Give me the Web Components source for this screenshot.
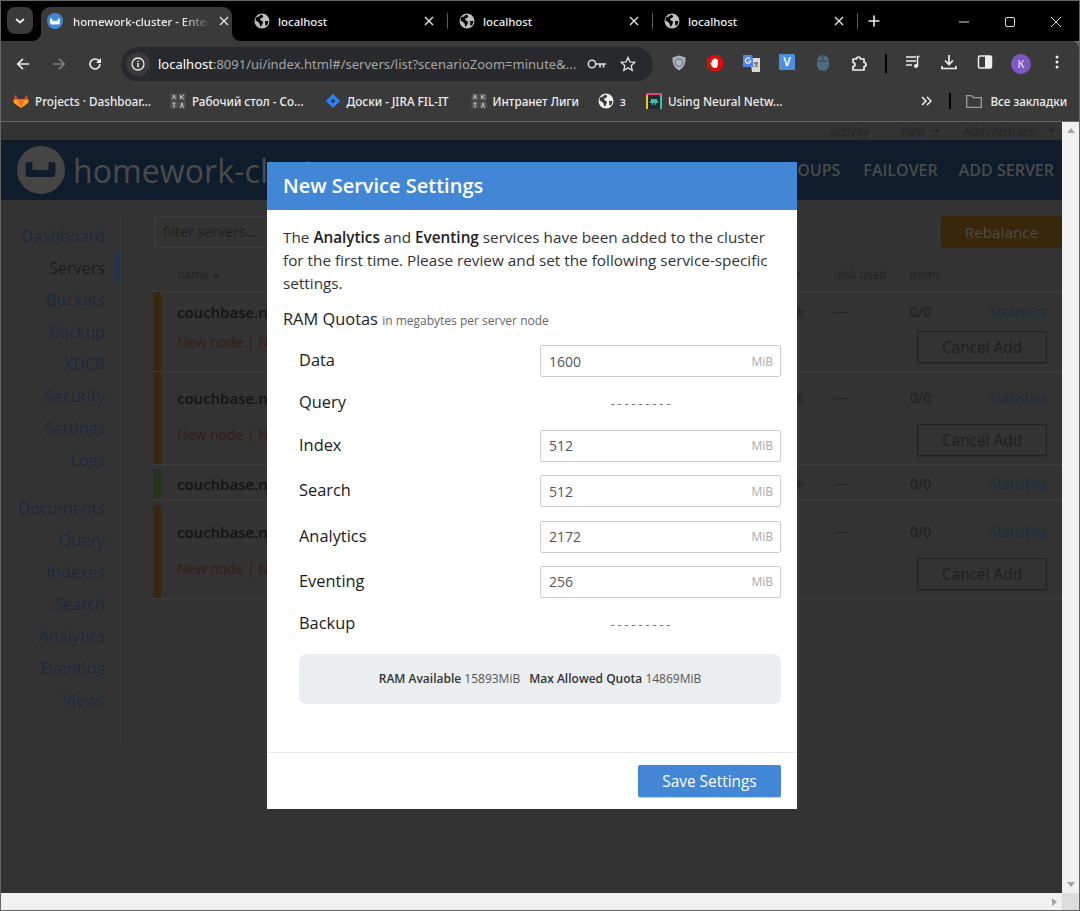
<!DOCTYPE html>
<html lang="en">
<head>
<meta charset="utf-8">
<title>homework-cluster</title>
<style>
  html, body { margin: 0; height: 100%; overflow: hidden; }
  body { background: #666; padding: 1px; box-sizing: border-box; display: flex; flex-direction: column; font-family: "Open Sans", "Liberation Sans", sans-serif; }
  browser-chrome { flex: none; }
  browser-viewport { flex: 1; min-height: 0; }
</style>
</head>
<body>
<browser-chrome></browser-chrome>
<browser-viewport>
  <cluster-page></cluster-page>
  <service-settings slot="dialog"></service-settings>
</browser-viewport>

<script>
const GLOBE = (c, bg) => `<svg width="16" height="16" viewBox="0 0 16 16" style="display:block"><circle cx="8" cy="8" r="7.5" fill="${c}"/><path d="M2 4.500 5 3.500 7 1.500 9.500 3 8 5 6 5.500 6.800 7.500 9 8.500 8.500 11 6.500 14 5.500 10.500 3.500 8.500 1.500 7.500ZM11 8h3.500l-1 3.500L11.500 13Z" fill="${bg}"/></svg>`;
const CLOSE = `<svg width="10" height="10" viewBox="0 0 10 10"><path d="M1 1 9 9M9 1 1 9" stroke="#e3e3e3" stroke-width="1.4" fill="none"/></svg>`;

class BrowserTab extends HTMLElement {
  constructor() {
    super();
    const active = this.hasAttribute('active');
    this.attachShadow({ mode: 'open' }).innerHTML = `
      <style>
        :host { display: flex; align-items: center; width: 205px; height: 34px; box-sizing: border-box; padding: 0 17px 6px 8px; position: relative; font: 500 11.4px "Noto Sans", "Open Sans", sans-serif; color: #eee; }
        :host([active]) { background: #3a3a3a; border-radius: 9px 9px 0 0; width: 191px; margin: 0 14px 0 8px; padding: 0 3px 6px 6px; }
        :host([active])::before, :host([active])::after { content: ""; position: absolute; bottom: 0; width: 8px; height: 8px; }
        :host([active])::before { left: -8px; background: radial-gradient(circle at 0 0, #000 7.5px, #3a3a3a 8px); }
        :host([active])::after { right: -8px; background: radial-gradient(circle at 100% 0, #000 7.5px, #3a3a3a 8px); }
        .icon { width: 16px; height: 16px; flex: none; margin-right: 8px; }
        :host([active]) .icon { margin-right: 10px; }
        .title { flex: 1; white-space: nowrap; overflow: hidden; ${active ? '-webkit-mask-image: linear-gradient(90deg,#000 80%,transparent);' : ''} }
        .close { flex: none; width: 10px; height: 10px; margin-left: 9px; line-height: 0; }
        :host([sep])::after { content: ""; position: absolute; right: 3px; top: 6px; height: 16px; width: 1px; background: #5a5a5a; }
      </style>
      <span class="icon"><slot name="icon"></slot></span>
      <span class="title"><slot></slot></span>
      <span class="close">${CLOSE}</span>`;
  }
}

class BrowserChrome extends HTMLElement {
  constructor() {
    super();
    const ic = (w, body) => `<svg width="${w}" height="${w}" viewBox="0 0 ${w} ${w}">${body}</svg>`;
    const globeDim = GLOBE('#bdbdbd', '#000');
    const aika = `<svg width="16" height="16" viewBox="0 0 16 16"><path d="M.5.500h7v7h-7zM8.500.500h7v7h-7zM.5 8.500h7v7h-7zM8.500 8.500h7v7h-7z" fill="#555"/><path d="M2.500 6 4 2l1.500 4M10.500 2v4M14 2l-3 2 3 2M4 10v5M2.500 10h3M10.500 15 12 10l1.500 5" stroke="#ddd" stroke-width=".8" fill="none"/></svg>`;
    this.attachShadow({ mode: 'open' }).innerHTML = `
      <style>
        :host { display: block; color: #eee; font-family: "Noto Sans", "Open Sans", sans-serif; }
        .strip { height: 40px; background: #000; display: flex; align-items: flex-end; position: relative; }
        .search { width: 26px; height: 27px; background: #3a3a3a; border-radius: 8px; margin: 0 0 7px 6px; flex: none; display: flex; align-items: center; justify-content: center; }
        .tabs { display: flex; align-items: flex-end; }
        .new { width: 16px; margin: 0 0 14px 7px; line-height: 0; }
        .win { margin-left: auto; display: flex; align-self: flex-start; margin-top: 9px; }
        .win span { width: 46px; height: 24px; display: flex; align-items: center; justify-content: center; }
        .tools { height: 40px; box-sizing: border-box; padding-top: 6px; background: #3a3a3a; display: flex; align-items: center; border-radius: 0 8px 0 0; }
        .btn { width: 36px; display: flex; justify-content: center; flex: none; line-height: 0; }
        .omni { width: 532px; height: 35px; margin-left: 8px; background: #27292d; border-radius: 18px; display: flex; align-items: center; flex: none; box-sizing: border-box; padding: 0 12px 0 5px; }
        .chip { width: 24px; height: 24px; border-radius: 50%; background: #3a3a3a; display: flex; align-items: center; justify-content: center; flex: none; }
        .url { margin-left: 8px; font-size: 13px; white-space: nowrap; color: #a6a6a6; width: 426px; overflow: hidden; flex: none; }
        .url b { font-weight: 400; color: #fff; }
        .exts { display: flex; margin-left: 8px; }
        .marks { height: 40px; background: #3a3a3a; border-bottom: 1px solid #666; display: flex; align-items: center; font-size: 11.7px; font-weight: 500; white-space: nowrap; position: relative; }
        .mark { display: flex; align-items: center; gap: 6px; flex: none; }
        .mark svg { flex: none; }
        .vsep { width: 2px; height: 19px; background: #000; flex: none; }
      </style>
      <div class="strip">
        <div class="search"><svg width="10" height="6" viewBox="0 0 10 6"><path d="M1 1l4 3.500L9 1" stroke="#eee" stroke-width="1.800" fill="none"/></svg></div>
        <div class="tabs">
          <browser-tab active>
            <svg slot="icon" width="16" height="16" viewBox="0 0 16 16" style="display:block"><circle cx="8" cy="8" r="8" fill="#3f88d8"/><path d="M3 6.500a1 1 0 0 1 1-1h1.300v2.300h5.400V5.500H12a1 1 0 0 1 1 1v3a2 2 0 0 1-2 2H5a2 2 0 0 1-2-2Z" fill="#fff"/></svg>
            homework-cluster - Enterprise
          </browser-tab>
          <browser-tab sep><span slot="icon">${globeDim}</span>localhost</browser-tab>
          <browser-tab sep><span slot="icon">${globeDim}</span>localhost</browser-tab>
          <browser-tab sep><span slot="icon">${globeDim}</span>localhost</browser-tab>
        </div>
        <div class="new"><svg width="12" height="12" viewBox="0 0 12 12"><path d="M6 .5v11M.5 6h11" stroke="#eee" stroke-width="1.600"/></svg></div>
        <div class="win">
          <span><svg width="10" height="10" viewBox="0 0 10 10"><path d="M0 5h10" stroke="#ddd"/></svg></span>
          <span><svg width="10" height="10" viewBox="0 0 10 10"><rect x=".5" y=".5" width="9" height="9" rx="1.500" fill="none" stroke="#ddd"/></svg></span>
          <span><svg width="10" height="10" viewBox="0 0 10 10"><path d="M0 0l10 10M10 0 0 10" stroke="#ddd"/></svg></span>
        </div>
      </div>
      <div class="tools">
        <span class="btn" style="margin-left:4px">${ic(14, '<path d="M13 7H2M7 1.800 1.800 7 7 12.200" stroke="#eee" stroke-width="1.700" fill="none"/>')}</span>
        <span class="btn">${ic(14, '<path d="M1 7h11M7 1.800 12.200 7 7 12.200" stroke="#7d7d7d" stroke-width="1.700" fill="none"/>')}</span>
        <span class="btn">${ic(14, '<path d="M12 7a5 5 0 1 1-1.500-3.600L12.500 5.500" stroke="#eee" stroke-width="1.600" fill="none"/><path d="M13 1v5H8Z" fill="#eee"/>')}</span>
        <div class="omni">
          <span class="chip">${ic(14, '<circle cx="7" cy="7" r="6" fill="none" stroke="#eee" stroke-width="1.300"/><path d="M7 6v4.200M7 3.700v1.400" stroke="#eee" stroke-width="1.500"/>')}</span>
          <span class="url"><b>localhost</b>:8091/ui/index.html#/servers/list?scenarioZoom=minute&amp;...</span>
          <span class="btn" style="width:22px;margin-left:2px"><svg width="20" height="12" viewBox="0 0 20 12"><circle cx="5" cy="6" r="3.700" fill="none" stroke="#ddd" stroke-width="1.500"/><path d="M9 6h10M13 6v3.500M16.500 6v3.500" stroke="#ddd" stroke-width="1.700" fill="none"/></svg></span>
          <span class="btn" style="width:30px;margin-left:5px">${ic(16, '<path d="m8 1.500 2 4.400 4.800.5-3.600 3.200 1 4.700L8 11.900l-4.200 2.400 1-4.700L1.200 6.400 6 5.900Z" fill="none" stroke="#ddd" stroke-width="1.400"/>')}</span>
        </div>
        <div class="exts">
          <span class="btn">${ic(18, '<path d="M9 1.500 15.500 3.500c.3 6-1.500 10-6.500 13-5-3-6.800-7-6.500-13Z" fill="#aeb6bd"/><circle cx="9" cy="8.500" r="3.800" fill="none" stroke="#7b8792" stroke-width="1.600"/>')}</span>
          <span class="btn">${ic(18, '<path d="M5.500 1h7L17 5.500v7L12.500 17h-7L1 12.500v-7Z" fill="#e00b0b"/><path d="M5.800 9V6.500a.8.8 0 0 1 1.500 0V5a.8.8 0 0 1 1.500 0v-.2a.8.8 0 0 1 1.500 0V5.800a.8.8 0 0 1 1.500 0V11c0 2-1.200 3-3 3-1.500 0-2.300-.7-3-2L4.500 9.500c-.3-.8.800-1.300 1.300-.5Z" fill="#fff"/>')}</span>
          <span class="btn"><svg width="17" height="18" viewBox="0 0 17 18"><path d="M7 4h10v14H9Z" fill="#d9d9d9"/><path d="M0 1h9.500l1 12H0Z" fill="#4a86e8"/><path d="M7.800 6.500A2.700 2.700 0 1 1 7 4.700M5.200 7h2.600" fill="none" stroke="#fff" stroke-width="1.100"/><path d="M11 9h4M13 8v1M12 9c.3 2 1.500 3.300 3 4M14.500 9c-.3 2-1.500 3.300-3 4" stroke="#555" fill="none"/></svg></span>
          <span class="btn"><svg width="16" height="16" viewBox="0 0 16 16" style="display:block"><rect width="16" height="16" rx="1" fill="#4d90e0"/><text x="8" y="12.400" text-anchor="middle" font-family="Open Sans" font-size="12" font-weight="600" fill="#fff">V</text></svg></span>
          <span class="btn">${ic(18, '<rect x="3" y="1" width="12" height="16" rx="6" fill="#4d6b85"/><path d="M3.500 7h11M9 1v6" stroke="#3a3a3a" stroke-width=".8"/>')}</span>
          <span class="btn">${ic(18, '<path d="M3 5h3.500a2 2 0 0 1 4 0H14v3.500a2 2 0 0 1 0 4V16H3v-3.500a2 2 0 0 0 0-4Z" fill="none" stroke="#eee" stroke-width="1.700" stroke-linejoin="round"/>')}</span>
          <span class="vsep" style="margin:0 8px 0 8px"></span>
          <span class="btn">${ic(16, '<path d="M1 3h10M1 7h10M1 11h6" stroke="#eee" stroke-width="1.500"/><path d="M14.500 2.500h-2V12" stroke="#eee" stroke-width="1.500" fill="none"/><circle cx="11" cy="12" r="2" fill="#eee"/>')}</span>
          <span class="btn">${ic(16, '<path d="M8 1v9M4 6.500 8 10.500l4-4M1 12v2.500h14V12" stroke="#eee" stroke-width="1.700" fill="none"/>')}</span>
          <span class="btn">${ic(16, '<rect x="1.500" y="2" width="13" height="12" rx="1.500" fill="none" stroke="#eee" stroke-width="1.500"/><rect x="8" y="2" width="6.500" height="12" fill="#eee"/>')}</span>
          <span class="btn"><span style="width:20px;height:20px;border-radius:50%;background:#7e57c2;color:#eee;font-size:11px;line-height:20px;text-align:center;display:block">К</span></span>
          <span class="btn">${ic(16, '<circle cx="8" cy="3" r="1.500" fill="#eee"/><circle cx="8" cy="8" r="1.500" fill="#eee"/><circle cx="8" cy="13" r="1.500" fill="#eee"/>')}</span>
        </div>
      </div>
      <div class="marks">
        <span class="mark" style="margin-left:12px"><svg width="16" height="16" viewBox="0 0 17 16"><path d="M8.500 15.500 1 10 .5 7 2.700.8 5 6h7L14.300.8 16.500 7 16 10Z" fill="#e24329"/><path d="M8.500 15.500 5 6h7Z" fill="#fc6d26"/><path d="M8.500 15.500 1 10 .5 7 5 6.500ZM8.500 15.500 16 10l.5-3L12 6.500Z" fill="#fca326"/></svg>Projects · Dashboar...</span>
        <span class="mark" style="margin-left:19px">${aika}Рабочий стол - Со...</span>
        <span class="mark" style="margin-left:21px"><svg width="16" height="16" viewBox="0 0 16 16"><path d="M8 1 15 8 8 15 1 8Z" fill="#2684ff"/><path d="M8 5.500 10.500 8 8 10.500 5.500 8Z" fill="#3a3a3a"/></svg>Доски - JIRA FIL-IT</span>
        <span class="mark" style="margin-left:22px">${aika}Интранет Лиги</span>
        <span class="mark" style="margin-left:19px">${GLOBE('#f2f2f2', '#3a3a3a')}з</span>
        <span class="mark" style="margin-left:20px"><svg width="16" height="16" viewBox="0 0 16 16"><rect width="16" height="16" fill="#2a2a2a"/><path d="M0 0h16v2H0z" fill="#e0457b"/><path d="M0 2h2v14H0z" fill="#f2c12e"/><path d="M14 2h2v14h-2z" fill="#2ec4b6"/><path d="M5 6h6v2h1v2H4V8h1ZM6 10h1v2H6ZM9 10h1v2H9Z" fill="#2ec4b6"/></svg>Using Neural Netw...</span>
        <span class="mark" style="margin-left:139px"><svg width="11" height="10" viewBox="0 0 11 10"><path d="M1 1l4 4-4 4M6 1l4 4-4 4" stroke="#eee" stroke-width="1.500" fill="none"/></svg></span>
        <span class="vsep" style="margin-left:17px;height:16px"></span>
        <span class="mark" style="margin-left:15px;gap:8px"><svg width="16" height="13" viewBox="0 0 16 13"><path d="M.7.700h5l1.800 2h7.800v9.600H.700Z" fill="none" stroke="#9b9b9b" stroke-width="1.300"/></svg>Все закладки</span>
      </div>`;
  }
}

class BrowserViewport extends HTMLElement {
  constructor() {
    super();
    this.attachShadow({ mode: 'open' }).innerHTML = `
      <style>
        :host { display: grid; grid-template-columns: 1fr 17px; grid-template-rows: 1fr 17px; position: relative; background: #333; }
        .view { position: relative; overflow: hidden; min-width: 0; min-height: 0; }
        .overlay { position: absolute; left: 266px; top: 40px; }
        .vbar { background: #f1f1f1; display: flex; flex-direction: column; justify-content: space-between; align-items: center; padding: 6px 0; }
        .hbar { background: #f1f1f1; display: flex; justify-content: flex-end; align-items: center; padding-right: 5px; }
        .corner { background: #dcdcdc; }
        i { display: block; width: 0; height: 0; border: 4px solid transparent; }
      </style>
      <div class="view"><slot></slot><div class="overlay"><slot name="dialog"></slot></div></div>
      <div class="vbar"><i style="border-bottom:5px solid #a3a3a3;border-top:0"></i><i style="border-top:5px solid #a3a3a3;border-bottom:0"></i></div>
      <div class="hbar"><i style="border-left:5px solid #a3a3a3;border-right:0"></i></div>
      <div class="corner"></div>`;
  }
}

class SideNav extends HTMLElement {
  constructor() {
    super();
    const group = items => items.map(n => `<a class="${n === 'Servers' ? 'on' : ''}">${n}</a>`).join('');
    this.attachShadow({ mode: 'open' }).innerHTML = `
      <style>
        :host { display: block; width: 120px; margin-top: 16px; padding-top: 4px; height: 529px; box-sizing: border-box; border-right: 1px solid #3a3a3a; flex: none; font-size: 16.2px; }
        a { display: block; height: 32px; line-height: 32px; text-align: right; padding-right: 15px; color: #1a2942; position: relative; }
        .on { color: #1c1c1c; }
        .on::after { content: ""; position: absolute; right: 0; top: 0; width: 4px; height: 32px; background: #1d3556; }
        nav + nav { margin-top: 16px; }
      </style>
      <nav>${group(['Dashboard', 'Servers', 'Buckets', 'Backup', 'XDCR', 'Security', 'Settings', 'Logs'])}</nav>
      <nav>${group(['Documents', 'Query', 'Indexes', 'Search', 'Analytics', 'Eventing', 'Views'])}</nav>`;
  }
}

class ServerRow extends HTMLElement {
  constructor() {
    super();
    const warn = this.hasAttribute('warn');
    const pct = this.hasAttribute('nopct') ? '' : '0%';
    this.attachShadow({ mode: 'open' }).innerHTML = `
      <style>
        :host { display: grid; grid-template-columns: 8px 16px 600px 26px 31px 76px 50px 87px 15px; grid-template-rows: var(--r1, auto) 1fr; border-bottom: 1px solid #3e3e3e; height: var(--h, auto); box-sizing: border-box; font-size: 14px; color: #1e1e1e; margin-top: var(--mt, 0); }
        .bar { background: ${warn ? '#38270a' : '#24351c'}; grid-row: 1 / span 2; }
        .name { grid-column: 3; font-size: 15px; font-weight: 600; white-space: nowrap; padding-top: var(--pt, 10px); line-height: 20px; overflow: hidden; color: #141414; }
        .num { padding-top: var(--pt, 10px); line-height: 20px; white-space: nowrap; }
        .pct { grid-column: 4; text-align: right; }
        .stats { grid-column: 8; text-align: right; color: #1a2942; }
        .alert { grid-column: 3; color: #381a15; line-height: 20px; margin-top: var(--gap, 0); white-space: nowrap; }
        .act { grid-column: 6 / span 3; display: flex; justify-content: flex-end; align-items: flex-start; }
        button { font: inherit; font-size: 15.4px; width: 130px; height: 32px; margin-top: var(--bt, 0); background: none; border: 1px solid #1f1f1f; border-radius: 2px; color: #1e1e1e; padding: 0; box-shadow: 0 1px 0 #2a2a2a; }
      </style>
      <div class="bar"></div>
      <div class="name">couchbase.node</div>
      <div class="num pct">${pct}</div>
      <div class="num" style="grid-column:6">---</div>
      <div class="num" style="grid-column:7">0/0</div>
      <div class="num stats">Statistics</div>
      ${warn ? `<div class="alert">New node | Not taking traffic</div><div class="act"><button>Cancel Add</button></div>` : ''}`;
  }
}

class ClusterPage extends HTMLElement {
  constructor() {
    super();
    this.attachShadow({ mode: 'open' }).innerHTML = `
      <style>
        :host { display: block; background: #333; height: 100%; font-family: "Open Sans", "Liberation Sans", sans-serif; }
        .util { height: 18px; display: flex; justify-content: flex-end; align-items: center; font-size: 12px; color: #232323; padding-right: 8px; }
        .util span { margin-left: 32px; display: flex; align-items: center; }
        .util span:last-child { margin-left: 23px; }
        .util i, .sort { width: 0; height: 0; border: 3.500px solid transparent; border-top: 4px solid #232323; border-bottom: 0; margin-left: 8px; }
        header { height: 60px; background: #0e1c2c; display: flex; align-items: center; color: #4b4b4b; padding-left: 16px; white-space: nowrap; }
        h1 { font-size: 32px; font-weight: 400; margin: 0 0 0 8px; letter-spacing: .1px; }
        .tabs { margin-left: auto; display: flex; gap: 21px; font-size: 16px; font-weight: 600; padding-right: 8px; }
        .tabs span:first-child { margin-right: 2px; }
        .main { display: flex; }
        .content { margin-left: 32px; flex: 1; min-width: 0; }
        .top { display: flex; justify-content: space-between; margin-top: 16px; height: 32px; }
        .filter { width: 300px; height: 32px; margin-left: 1px; box-sizing: border-box; border: 1px solid #3e3e3e; border-radius: 2px; padding-left: 8px; line-height: 30px; font-size: 14.2px; color: #1f1f1f; }
        .reb { width: 121px; height: 32px; background: #38270a; border-radius: 2px 0 0 2px; color: #4b4b4b; font-size: 15.3px; line-height: 32px; text-align: center; }
        .head { position: relative; height: 43px; border-bottom: 1px solid #3e3e3e; font-size: 12px; color: #232323; }
        .head span { position: absolute; top: 18px; white-space: nowrap; display: flex; align-items: center; }
        .sort { border-top: 0; border-bottom: 4px solid #232323; margin-left: 4px; }
      </style>
      <div class="util"><span>activity</span><span>help<i></i></span><span>Administrator<i></i></span></div>
      <header>
        <svg width="48" height="48" viewBox="0 0 48 48"><circle cx="24" cy="24" r="24" fill="#454545"/><path d="M8.500 19a3 3 0 0 1 3-3h4v8h16v-8h4a3 3 0 0 1 3 3v8a4 4 0 0 1-4 4h-22a4 4 0 0 1-4-4Z" fill="#0e1c2c"/></svg>
        <h1>homework-cluster</h1>
        <div class="tabs"><span>SERVER GROUPS</span><span>FAILOVER</span><span>ADD SERVER</span></div>
      </header>
      <div class="main">
        <side-nav></side-nav>
        <div class="content">
          <div class="top"><div class="filter">filter servers...</div><div class="reb">Rebalance</div></div>
          <div class="head">
            <span style="left:24px">name<b class="sort"></b></span>
            <span style="left:618px">swap</span>
            <span style="left:681px">disk used</span>
            <span style="left:757px">items</span>
          </div>
          <server-row warn style="--h:80px;--r1:30px;--pt:10px;--gap:10px;--bt:9px"></server-row>
          <server-row warn style="--h:93px;--r1:36px;--pt:16px;--gap:17px;--bt:16px"></server-row>
          <server-row style="--h:31px;--pt:5px;--mt:4px"></server-row>
          <server-row warn nopct style="--h:94px;--r1:37px;--pt:17px;--gap:17px;--bt:16px;--mt:5px"></server-row>
        </div>
      </div>`;
  }
}

class QuotaRow extends HTMLElement {
  constructor() {
    super();
    const v = this.getAttribute('value');
    this.attachShadow({ mode: 'open' }).innerHTML = `
      <style>
        :host { display: flex; align-items: center; justify-content: space-between; height: ${v ? 32 : 26}px; margin: 0 0 13.4px 16px; }
        .lab { font-size: 16.4px; font-weight: 500; color: #1a1a1a; padding-bottom: 3px; }
        .input { width: 241px; height: 32px; box-sizing: border-box; border: 1px solid #ccc; border-radius: 2px; display: flex; justify-content: space-between; align-items: center; padding: 0 7px 0 8px; font-size: 14px; color: #555; }
        .unit { font-size: 12px; color: #aaa; }
        .none { width: 241px; box-sizing: border-box; padding-right: 40px; text-align: center; font-size: 12px; color: #666; white-space: pre; }
      </style>
      <span class="lab"><slot></slot></span>
      ${v ? `<div class="input"><span>${v}</span><span class="unit">MiB</span></div>` : `<div class="none">- - - - - - - - -</div>`}`;
  }
}

class ServiceSettings extends HTMLElement {
  constructor() {
    super();
    this.attachShadow({ mode: 'open' }).innerHTML = `
      <style>
        :host { display: flex; flex-direction: column; width: 530px; height: 647px; background: #fff; color: #222; font-family: "Open Sans", "Liberation Sans", sans-serif; }
        .hd { height: 48px; background: #4287d6; color: #fff; font-size: 20px; font-weight: 600; line-height: 48px; padding-left: 16px; flex: none; }
        .bd { flex: 1; padding: 16px 16px 0; }
        p { margin: 0; font-size: 15.3px; line-height: 23px; color: #333; }
        p b { color: #222; }
        b { font-weight: 600; }
        .ram { margin: 13px 0 15px; height: 22px; line-height: 22px; font-size: 16.4px; font-weight: 500; white-space: nowrap; }
        small { font-size: 12px; font-weight: 400; color: #666; }
        .sum { margin: 16.4px 0 0 16px; height: 50px; border-radius: 8px; background: #ebeef1; display: flex; justify-content: center; align-items: center; gap: 9px; font-size: 12px; color: #555; }
        .sum b { color: #333; }
        .ft { height: 57px; box-sizing: border-box; border-top: 1px solid #e8e8e8; display: flex; justify-content: flex-end; align-items: flex-start; padding: 12px 16px 0; flex: none; }
        button { width: 143px; height: 32px; background: #4287d6; color: #fff; border: 0; border-radius: 2px; font: 500 15.4px "Open Sans", sans-serif; padding: 0; box-shadow: 0 1px 0 #d0d0d0; }
      </style>
      <div class="hd">New Service Settings</div>
      <div class="bd">
        <p>The <b>Analytics</b> and <b>Eventing</b> services have been added to the cluster for the first time. Please review and set the following service-specific settings.</p>
        <div class="ram">RAM Quotas <small>in megabytes per server node</small></div>
        <quota-row value="1600">Data</quota-row>
        <quota-row>Query</quota-row>
        <quota-row value="512">Index</quota-row>
        <quota-row value="512">Search</quota-row>
        <quota-row value="2172">Analytics</quota-row>
        <quota-row value="256">Eventing</quota-row>
        <quota-row>Backup</quota-row>
        <div class="sum"><span><b>RAM Available</b> 15893MiB</span><span><b>Max Allowed Quota</b> 14869MiB</span></div>
      </div>
      <div class="ft"><button>Save Settings</button></div>`;
  }
}

customElements.define('browser-tab', BrowserTab);
customElements.define('browser-chrome', BrowserChrome);
customElements.define('browser-viewport', BrowserViewport);
customElements.define('side-nav', SideNav);
customElements.define('server-row', ServerRow);
customElements.define('cluster-page', ClusterPage);
customElements.define('quota-row', QuotaRow);
customElements.define('service-settings', ServiceSettings);
</script>
</body>
</html>
